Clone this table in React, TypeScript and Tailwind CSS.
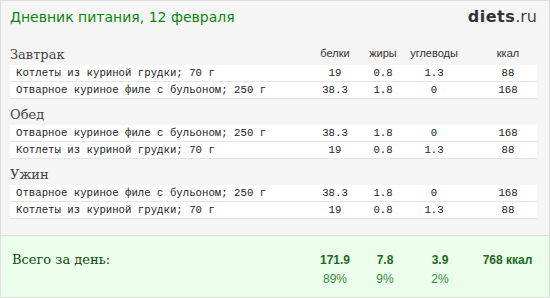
import React from "react";

type Item = { name: string; p: string; f: string; c: string; k: string };

const K: Item = { name: "Котлеты из куриной грудки; 70 г", p: "19", f: "0.8", c: "1.3", k: "88" };
const O: Item = { name: "Отварное куриное филе с бульоном; 250 г", p: "38.3", f: "1.8", c: "0", k: "168" };

const meals: { title: string; items: Item[] }[] = [
  { title: "Завтрак", items: [K, O] },
  { title: "Обед", items: [O, K] },
  { title: "Ужин", items: [O, K] },
];

function Row({ it }: { it: Item }) {
  return (
    <div className="grid grid-cols-[301px_48px_48px_54px_76px] h-[17px] items-center bg-white border-b border-[#e4e4e4] font-['Liberation_Mono',monospace] text-[10.7px] leading-[16px] text-[#222]">
      <div className="pl-[6px] whitespace-nowrap">{it.name}</div>
      <div className="text-center">{it.p}</div>
      <div className="text-center">{it.f}</div>
      <div className="text-center">{it.c}</div>
      <div className="text-center pl-[18px]">{it.k}</div>
    </div>
  );
}

function Header({ title, showCols }: { title: string; showCols: boolean }) {
  return (
    <div className="grid grid-cols-[301px_48px_48px_54px_76px] h-[26px] items-end">
      <div className="font-['DejaVu_Serif',serif] text-[13px] leading-[16px] text-[#444] pb-[2px]">{title}</div>
      {showCols ? (
        <>
          <div className="text-center font-['Liberation_Sans',sans-serif] text-[11px] leading-[13px] text-[#333] pb-[5px]">белки</div>
          <div className="text-center font-['Liberation_Sans',sans-serif] text-[11px] leading-[13px] text-[#333] pb-[5px]">жиры</div>
          <div className="text-center font-['Liberation_Sans',sans-serif] text-[11px] leading-[13px] text-[#333] pb-[5px]">углеводы</div>
          <div className="text-center pl-[18px] font-['Liberation_Sans',sans-serif] text-[11px] leading-[13px] text-[#333] pb-[5px]">ккал</div>
        </>
      ) : null}
    </div>
  );
}

export default function App() {
  return (
    <div className="w-[550px] h-[298px] bg-[#f5f5f5] border border-[#dedede] flex flex-col overflow-hidden">
      <div className="h-[38px] flex items-baseline justify-between pl-[9px] pr-[12px] pt-[6px]">
        <div className="font-['DejaVu_Sans',sans-serif] text-[14px] leading-[17px] text-[#0b870b]">
          Дневник питания, 12 февраля
        </div>
        <div className="font-['DejaVu_Sans',sans-serif] text-[16px] leading-[19px]">
          <span className="font-bold text-[#333] tracking-[0.5px]">diets</span>
          <span className="text-[#444]">.ru</span>
        </div>
      </div>
      <div className="ml-[9px] mr-[12px]">
        {meals.map((m, i) => (
          <div key={m.title}>
            <Header title={m.title} showCols={i === 0} />
            {m.items.map((it, j) => (
              <Row key={j} it={it} />
            ))}
          </div>
        ))}
      </div>
      <div className="mt-[16px] flex-1 border-t border-[#dcdcdc] bg-[#ebfdeb] pt-[17px]">
        <div className="grid grid-cols-[310px_48px_52px_58px_77px] items-baseline">
          <div className="pl-[11px] font-['DejaVu_Serif',serif] text-[13px] leading-[14px] text-[#0a4f0a]">Всего за день:</div>
          <div className="text-center font-['Liberation_Sans',sans-serif] font-bold text-[12px] leading-[14px] text-[#1c6b1c]">171.9</div>
          <div className="text-center font-['Liberation_Sans',sans-serif] font-bold text-[12px] leading-[14px] text-[#1c6b1c]">7.8</div>
          <div className="text-center font-['Liberation_Sans',sans-serif] font-bold text-[12px] leading-[14px] text-[#1c6b1c]">3.9</div>
          <div className="text-center font-['Liberation_Sans',sans-serif] font-bold text-[12px] leading-[14px] text-[#1c6b1c]">768 ккал</div>
        </div>
        <div className="grid grid-cols-[310px_48px_52px_58px_77px] mt-[5px] font-['Liberation_Sans',sans-serif] text-[12px] leading-[14px] text-[#3d8a3d]">
          <div />
          <div className="text-center">89%</div>
          <div className="text-center">9%</div>
          <div className="text-center">2%</div>
          <div />
        </div>
      </div>
    </div>
  );
}
